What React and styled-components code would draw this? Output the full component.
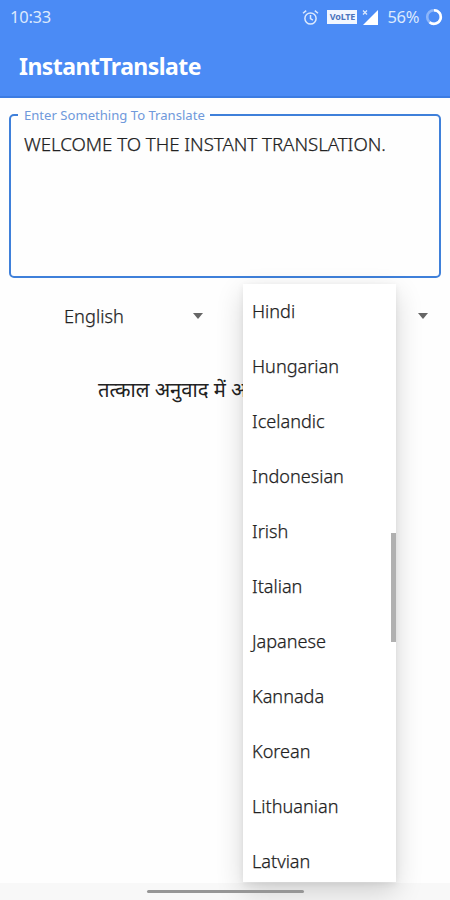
import React from 'react'
import styled, { createGlobalStyle, css } from 'styled-components'

const LANGUAGES = [
  'Hindi',
  'Hungarian',
  'Icelandic',
  'Indonesian',
  'Irish',
  'Italian',
  'Japanese',
  'Kannada',
  'Korean',
  'Lithuanian',
  'Latvian'
]

// sits between the light and the regular weight
const bodyText = css`
  color: #222;
  font-weight: 300;
  -webkit-text-stroke: 0.25px #222;
`

const GlobalStyle = createGlobalStyle`
  * {
    box-sizing: border-box;
  }
  body {
    margin: 0;
    background: #fefefe;
    font-family: 'Noto Sans', 'Open Sans', sans-serif;
  }
`

const Screen = styled.div`
  position: relative;
  width: 450px;
  height: 900px;
  display: flex;
  flex-direction: column;
  overflow: hidden;
  background: #fefefe;
`

const Header = styled.header`
  height: 98px;
  flex: none;
  background: #4b8bf5;
  border-bottom: 2px solid #3c7ce2;
  color: #fff;
`

const StatusBar = styled.div`
  height: 36px;
  padding: 0 7px 0 10px;
  display: flex;
  align-items: center;
  color: #dce9fd;
  font-size: 16.5px;
  line-height: 34px;
`

const Clock = styled.span`
  flex: 1;
  margin-top: -2px;
  letter-spacing: -0.25px;
`

const StatusIcons = styled.div`
  display: flex;
  align-items: center;
  margin-top: -2px;

  svg {
    display: block;
  }
`

const Volte = styled.span`
  width: 30px;
  height: 14px;
  margin: 0 5px 0 8px;
  background: #f1f6ff;
  color: #4b74bd;
  font-size: 9px;
  font-weight: 700;
  line-height: 14px;
  letter-spacing: -0.2px;
  text-align: center;
`

const Battery = styled.span`
  margin: 0 6px 0 8px;
  letter-spacing: -0.35px;
`

const Title = styled.h1`
  margin: 0;
  padding-left: 19px;
  font-size: 23px;
  font-weight: 700;
  line-height: 60px;
  letter-spacing: -0.55px;
`

const Field = styled.fieldset`
  height: 172px;
  flex: none;
  margin: 8px 9px 0;
  padding: 0 12px;
  border: 2.5px solid #3f80da;
  border-radius: 5px;
`

const FieldLabel = styled.legend`
  margin-left: -5px;
  padding: 0 5px 0 6px;
  color: #6f99db;
  font-size: 13.1px;
  line-height: 18px;
`

const FieldText = styled.div`
  margin-top: 7px;
  padding-left: 1px;
  ${bodyText}
  font-size: 18.7px;
  line-height: 26px;
  white-space: nowrap;
  letter-spacing: -0.04px;
`

const Pickers = styled.div`
  height: 76px;
  flex: none;
  display: flex;
  align-items: center;
  justify-content: space-between;
  padding: 0 22px 0 64px;
`

const Picker = styled.div`
  width: 139px;
  display: flex;
  align-items: center;
  justify-content: space-between;
  ${bodyText}
  font-size: 18.2px;
  letter-spacing: 0.05px;
`

const Arrow = styled.span`
  border: 5.5px solid transparent;
  border-top: 6px solid #666;
  border-bottom: 0;
`

const Result = styled.div`
  width: 145px;
  margin: 15px 0 0 98px;
  color: #222;
  font-size: 20.2px;
  line-height: 40px;
  white-space: nowrap;
`

const Menu = styled.div`
  position: absolute;
  left: 243px;
  top: 284px;
  z-index: 1;
  width: 153px;
  height: 598px;
  overflow: hidden;
  background: #fff;
`

const MenuShadow = styled(Menu)`
  z-index: 0;
  overflow: visible;
  box-shadow: 0 10px 26px rgba(0, 0, 0, 0.16), 0 2px 7px rgba(0, 0, 0, 0.07);
`

const MenuItem = styled.div`
  height: 55px;
  padding-left: 9px;
  ${bodyText}
  font-size: 18.1px;
  line-height: 55px;
  white-space: nowrap;
`

const ScrollThumb = styled.div`
  position: absolute;
  right: 0;
  top: 249px;
  width: 5px;
  height: 109px;
  background: #b0b0b0;
`

const NavBar = styled.div`
  height: 17px;
  flex: none;
  margin-top: auto;
  padding-top: 7px;
  background: #f8f8f8;
`

const NavHandle = styled.div`
  position: relative;
  z-index: 1;
  width: 157px;
  height: 3px;
  margin-left: 147px;
  border-radius: 2px;
  background: #969696;
`

const AlarmIcon = () => (
  <svg width='17' height='17' viewBox='0 0 17 17' fill='none' stroke='#dce9fd' strokeWidth='1.5'>
    <circle cx='8.5' cy='9.5' r='5.6' />
    <path d='M8.5 6v3.7l2.4 1.5M1 4.3 4.2 1.6M16 4.3l-3.2-2.7' />
  </svg>
)

const SignalIcon = () => (
  <svg width='17' height='17' viewBox='0 0 17 17'>
    <path d='M16 1v15H1z' fill='#fff' />
    <path d='m1 1.5 4 4m0-4-4 4' stroke='#dce9fd' strokeWidth='1.3' />
  </svg>
)

const BatteryRing = () => (
  <svg width='18' height='18' viewBox='0 0 18 18' fill='none' strokeWidth='2.6'>
    <circle cx='9' cy='9' r='6.8' stroke='#8db6fa' />
    <path d='M9 2.2a6.8 6.8 0 1 1-4.4 12' stroke='#fff' />
  </svg>
)

export default function App() {
  return (
    <Screen>
      <GlobalStyle />
      <Header>
        <StatusBar>
          <Clock>10:33</Clock>
          <StatusIcons>
            <AlarmIcon />
            <Volte>VoLTE</Volte>
            <SignalIcon />
            <Battery>56%</Battery>
            <BatteryRing />
          </StatusIcons>
        </StatusBar>
        <Title>InstantTranslate</Title>
      </Header>
      <Field>
        <FieldLabel>Enter Something To Translate</FieldLabel>
        <FieldText>WELCOME TO THE INSTANT TRANSLATION.</FieldText>
      </Field>
      <Pickers>
        <Picker>
          <span>English</span>
          <Arrow />
        </Picker>
        <Arrow />
      </Pickers>
      <Result lang='hi'>तत्काल अनुवाद में अ</Result>
      <NavBar>
        <NavHandle />
      </NavBar>
      <MenuShadow />
      <Menu>
        {LANGUAGES.map(name => (
          <MenuItem key={name}>{name}</MenuItem>
        ))}
        <ScrollThumb />
      </Menu>
    </Screen>
  )
}
